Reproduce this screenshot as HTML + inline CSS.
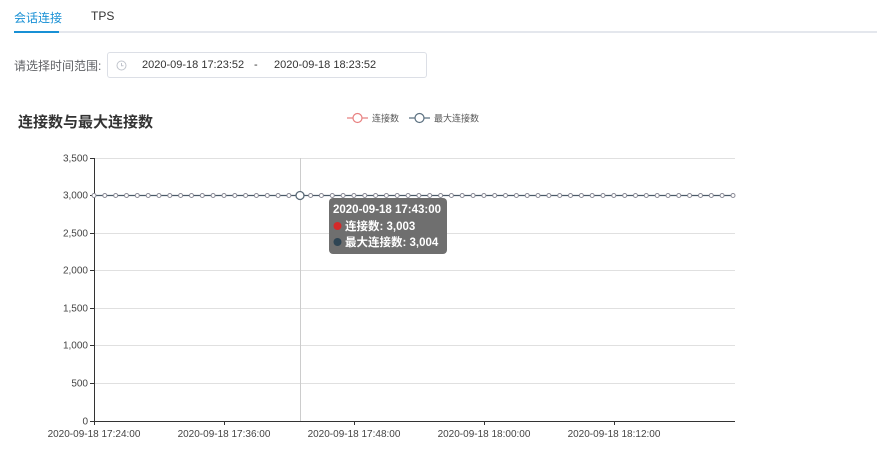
<!DOCTYPE html>
<html><head><meta charset="utf-8">
<style>
*{margin:0;padding:0;box-sizing:border-box}
body{width:877px;height:462px;background:#fff;font-family:"Liberation Sans","Noto Sans CJK SC",sans-serif;position:relative;overflow:hidden;color:#333}
.a{position:absolute;white-space:nowrap}
</style></head><body>
<div class="a" style="left:14px;top:9px;font-size:12px;color:#1890d5">会话连接</div>
<div class="a" style="left:91px;top:9px;font-size:12px;color:#333">TPS</div>
<div class="a" style="left:14px;top:31px;width:863px;height:2px;background:#e4e7ed"></div>
<div class="a" style="left:14px;top:31px;width:45px;height:2px;background:#1890d5"></div>
<div class="a" style="left:14px;top:57px;font-size:12px;color:#606266">请选择时间范围:</div>
<div class="a" style="left:107px;top:52px;width:320px;height:26px;border:1px solid #dcdfe6;border-radius:3px"></div>
<svg class="a" style="left:116px;top:60px" width="11" height="11" viewBox="0 0 11 11"><circle cx="5.5" cy="5.5" r="4.5" fill="none" stroke="#c0c4cc" stroke-width="1"/><path d="M5.5 3v2.8h2" fill="none" stroke="#c0c4cc" stroke-width="1"/></svg>
<div class="a" style="left:142px;top:59px;font-size:11px;color:#333">2020-09-18 17:23:52</div>
<div class="a" style="left:254px;top:59px;font-size:11px;color:#333">-</div>
<div class="a" style="left:274px;top:59px;font-size:11px;color:#333">2020-09-18 18:23:52</div>
<div class="a" style="left:18px;top:111px;font-size:15px;font-weight:bold;color:#333">连接数与最大连接数</div>
<svg class="a" style="left:0;top:0" width="877" height="462">
<g font-family="Liberation Sans,Noto Sans CJK SC,sans-serif">
<line x1="347" y1="118" x2="368" y2="118" stroke="#e88080" stroke-width="1.2"/><circle cx="357.5" cy="118" r="4.5" fill="#fff" stroke="#e88080" stroke-width="1.2"/>
<text x="372" y="121.5" font-size="9" fill="#555">连接数</text>
<line x1="409" y1="118" x2="430" y2="118" stroke="#5b7080" stroke-width="1.2"/><circle cx="419.5" cy="118" r="4.5" fill="#fff" stroke="#5b7080" stroke-width="1.2"/>
<text x="434" y="121.5" font-size="9" fill="#555">最大连接数</text>
<g stroke="#e0e0e0" stroke-width="1">
<line x1="94" y1="158.5" x2="735" y2="158.5"/><line x1="94" y1="195.5" x2="735" y2="195.5"/><line x1="94" y1="233.5" x2="735" y2="233.5"/><line x1="94" y1="270.5" x2="735" y2="270.5"/><line x1="94" y1="308.5" x2="735" y2="308.5"/><line x1="94" y1="345.5" x2="735" y2="345.5"/><line x1="94" y1="383.5" x2="735" y2="383.5"/>
</g>
<line x1="300.5" y1="158" x2="300.5" y2="421" stroke="#ccc"/>
<line x1="94.5" y1="158" x2="94.5" y2="421" stroke="#333"/>
<line x1="94" y1="421.5" x2="735" y2="421.5" stroke="#333"/>
<g stroke="#333"><line x1="90" y1="158.5" x2="94" y2="158.5"/><line x1="90" y1="195.5" x2="94" y2="195.5"/><line x1="90" y1="233.5" x2="94" y2="233.5"/><line x1="90" y1="270.5" x2="94" y2="270.5"/><line x1="90" y1="308.5" x2="94" y2="308.5"/><line x1="90" y1="345.5" x2="94" y2="345.5"/><line x1="90" y1="383.5" x2="94" y2="383.5"/><line x1="90" y1="421.5" x2="94" y2="421.5"/>
<line x1="94.5" y1="421" x2="94.5" y2="425"/><line x1="224.5" y1="421" x2="224.5" y2="425"/><line x1="354.5" y1="421" x2="354.5" y2="425"/><line x1="484.5" y1="421" x2="484.5" y2="425"/><line x1="614.5" y1="421" x2="614.5" y2="425"/></g>
<g font-size="10" fill="#444" text-anchor="end">
<text x="88" y="161.5">3,500</text><text x="88" y="198.5">3,000</text><text x="88" y="236.5">2,500</text><text x="88" y="273.5">2,000</text><text x="88" y="311.5">1,500</text><text x="88" y="348.5">1,000</text><text x="88" y="386.5">500</text><text x="88" y="424.5">0</text>
</g>
<g font-size="10" fill="#444" text-anchor="middle">
<text x="94" y="437">2020-09-18 17:24:00</text><text x="224" y="437">2020-09-18 17:36:00</text><text x="354" y="437">2020-09-18 17:48:00</text><text x="484" y="437">2020-09-18 18:00:00</text><text x="614" y="437">2020-09-18 18:12:00</text>
</g>
<line x1="94" y1="195.5" x2="734" y2="195.5" stroke="#e88080" stroke-width="1"/>
<line x1="94" y1="195.5" x2="734" y2="195.5" stroke="#4a5a68" stroke-width="1.3"/>
<g id="pts" fill="#fff" stroke="#8a8a96" stroke-width="1"></g>
<circle cx="300" cy="195.5" r="4" fill="#fff" stroke="#5b6b78" stroke-width="1.3"/>
<rect x="329" y="198" width="118" height="56" rx="4" fill="#6f6f6f"/>
<text x="333" y="213" font-size="11.5" font-weight="bold" fill="#fff">2020-09-18 17:43:00</text>
<circle cx="337.5" cy="226" r="4" fill="#d42a2a"/>
<text x="345" y="230" font-size="11.5" font-weight="bold" fill="#fff">连接数: 3,003</text>
<circle cx="337.5" cy="242" r="4" fill="#2f4554"/>
<text x="345" y="246" font-size="11.5" font-weight="bold" fill="#fff">最大连接数: 3,004</text>
</g>
</svg>
<script>
var g=document.getElementById('pts'),s='';
for(var i=0;i<60;i++){var x=94+i*10.83;if(i==19)continue;s+='<circle cx="'+x.toFixed(1)+'" cy="195.5" r="2"/>';}
g.innerHTML=s;
</script>
</body></html>
